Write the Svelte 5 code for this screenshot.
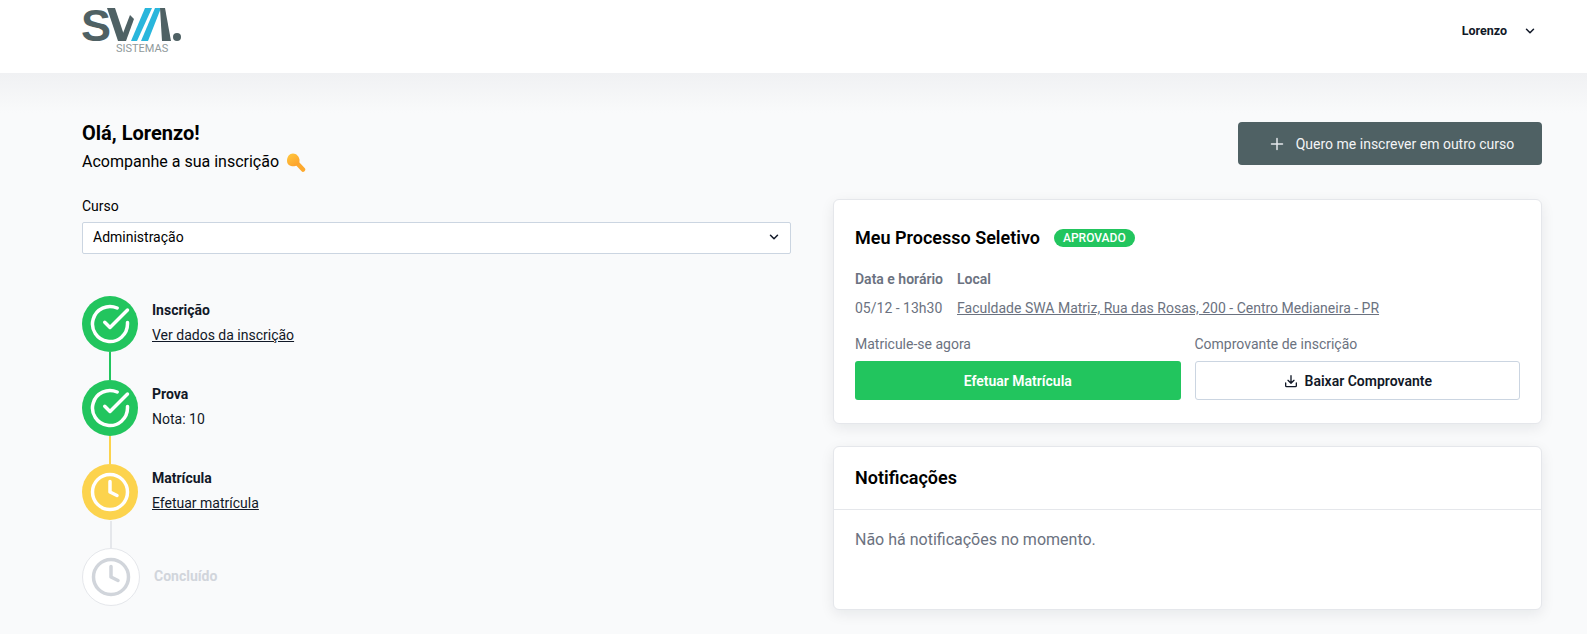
<script>
  let steps = [
    { title: "Inscrição", state: "done", link: "Ver dados da inscrição" },
    { title: "Prova", state: "done", text: "Nota: 10" },
    { title: "Matrícula", state: "pending", link: "Efetuar matrícula" },
    { title: "Concluído", state: "todo" },
  ];
</script>

<header class="topbar">
  <div class="logo">
    <svg width="104" height="50" viewBox="0 0 104 50">
      <text x="-1" y="34" class="logo-s">S</text>
      <polygon points="25,1 33,1 44,34 36,34" fill="#4f6164" />
      <polygon points="38,34 44,34 52,12 48,8" fill="#4f6164" />
      <polygon points="49,34 55,34 70,1 63,1" fill="#29b6dc" />
      <polygon points="59,34 66,34 79,1 73,1" fill="#29b6dc" />
      <polygon points="78,1 83,1 89,34 80,34" fill="#4f6164" />
      <circle cx="95" cy="30" r="4" fill="#4f6164" />
      <text x="34" y="45" class="logo-sub">SISTEMAS</text>
    </svg>
  </div>
  <div class="user">
    <span>Lorenzo</span>
    <svg width="12" height="12" viewBox="0 0 24 24" fill="none" stroke="#111827" stroke-width="3" stroke-linecap="round" stroke-linejoin="round"><path d="M5 8.500l7 7 7-7" /></svg>
  </div>
</header>

<main class="page">
  <div class="intro">
    <div>
      <h1>Olá, Lorenzo!</h1>
      <p class="sub">
        Acompanhe a sua inscrição
        <svg class="hand" width="20" height="20" viewBox="0 0 20 20">
          <defs>
            <linearGradient id="hand-fill" x1="0" y1="0" x2="0.6" y2="1">
              <stop offset="0" stop-color="#ffc93f" />
              <stop offset="1" stop-color="#fda32c" />
            </linearGradient>
          </defs>
          <path d="M9 9l8 8.500" stroke="#fda92e" stroke-width="4.500" stroke-linecap="round" fill="none" />
          <path d="M1 9C1 4.500 3.500 1.500 7 1.500c3.500 0 6 3 6.500 6 .3 2.500-.5 4.500-2 5.500-1.800 1.300-4.500 1.500-6.500 1C2.500 13.500 1 11.500 1 9z" fill="url(#hand-fill)" />
        </svg>
      </p>
    </div>
    <button class="btn-dark">
      <svg width="14" height="14" viewBox="0 0 14 14" fill="none" stroke="#e5e7eb" stroke-width="1.500" stroke-linecap="round"><path d="M7 1.500v11M1.500 7h11" /></svg>
      Quero me inscrever em outro curso
    </button>
  </div>

  <div class="columns">
    <section class="left">
      <div class="label">Curso</div>
      <div class="select">
        <span>Administração</span>
        <svg width="12" height="12" viewBox="0 0 24 24" fill="none" stroke="#111827" stroke-width="3" stroke-linecap="round" stroke-linejoin="round"><path d="M5 8.500l7 7 7-7" /></svg>
      </div>

      <ul class="steps">
        {#each steps as step, i}
          <li class="step {step.state}">
            <div class="marker">
              <div class="circle">
                {#if step.state === "done"}
                  <svg width="42" height="42" viewBox="0 0 24 24" fill="none" stroke-linecap="round" stroke-linejoin="round" stroke-width="2">
                    <path d="M22 11.080V12a10 10 0 1 1-5.930-9.140" />
                    <polyline points="22 4 12 14.010 9 11.010" />
                  </svg>
                {:else}
                  <svg width="42" height="42" viewBox="0 0 24 24" fill="none" stroke-linecap="round" stroke-linejoin="round" stroke-width="2">
                    <circle cx="12" cy="12" r="10" />
                    <polyline points="12 6 12 12 16 14" />
                  </svg>
                {/if}
              </div>
              {#if i < steps.length - 1}
                <div class="line"></div>
              {/if}
            </div>
            <div class="info">
              <div class="step-title">{step.title}</div>
              {#if step.link}
                <a href="#top" class="step-link">{step.link}</a>
              {:else if step.text}
                <div class="step-text">{step.text}</div>
              {/if}
            </div>
          </li>
        {/each}
      </ul>
    </section>

    <section class="right">
      <div class="card process">
        <div class="card-head">
          <h2>Meu Processo Seletivo</h2>
          <span class="badge">APROVADO</span>
        </div>
        <div class="meta">
          <div class="meta-h">Data e horário</div>
          <div class="meta-h">Local</div>
          <div>05/12 - 13h30</div>
          <a href="#top">Faculdade SWA Matriz, Rua das Rosas, 200 - Centro Medianeira - PR</a>
        </div>
        <div class="actions">
          <div class="action">
            <div class="action-label">Matricule-se agora</div>
            <button class="btn-green">Efetuar Matrícula</button>
          </div>
          <div class="action">
            <div class="action-label">Comprovante de inscrição</div>
            <button class="btn-outline">
              <svg width="16" height="16" viewBox="0 0 24 24" fill="none" stroke="#111827" stroke-width="2" stroke-linecap="round" stroke-linejoin="round"><path d="M4 15v4a1.500 1.500 0 0 0 1.500 1.500h13A1.500 1.500 0 0 0 20 19v-4" /><path d="M12 4v11.500M7.500 11l4.500 4.500 4.500-4.500" /></svg>
              Baixar Comprovante
            </button>
          </div>
        </div>
      </div>

      <div class="card notes">
        <h2 class="notes-title">Notificações</h2>
        <p class="notes-body">Não há notificações no momento.</p>
      </div>
    </section>
  </div>
</main>

<style>
  :global(body) {
    background: #f9fafb;
    font-family: Roboto, "Liberation Sans", sans-serif;
    color: #111827;
    overflow: hidden;
  }
  h1, h2, p, ul {
    margin: 0;
    padding: 0;
  }
  button {
    font-family: inherit;
    cursor: pointer;
  }
  .topbar {
    height: 73px;
    background: #fff;
    display: flex;
    justify-content: space-between;
    padding: 0 51px 0 82px;
  }
  .logo {
    padding-top: 7px;
  }
  .logo svg {
    display: block;
    overflow: visible;
  }
  .logo-s {
    font-family: "Liberation Sans", sans-serif;
    font-size: 45px;
    font-weight: 700;
    fill: #4f6164;
  }
  .logo-sub {
    font-family: Roboto, sans-serif;
    font-size: 11px;
    fill: #8f999b;
  }
  .user {
    display: flex;
    align-items: center;
    gap: 17px;
    font-size: 12.500px;
    font-weight: 700;
    height: 61px;
  }
  .page {
    background: linear-gradient(#f0f1f3, #f9fafb 40px);
    padding: 48px 45px 0 82px;
  }
  .intro {
    display: flex;
    justify-content: space-between;
    align-items: flex-start;
  }
  h1 {
    font-size: 20px;
    font-weight: 700;
    line-height: 24px;
    color: #000;
  }
  .sub {
    font-size: 16px;
    line-height: 24px;
    margin-top: 5px;
    color: #000;
    display: flex;
    align-items: center;
    gap: 7px;
  }
  .btn-dark {
    width: 304px;
    height: 43px;
    margin-top: 1px;
    padding: 0 0 0 4px;
    background: #4f6164;
    border: 0;
    border-radius: 4px;
    color: #f3f4f6;
    font-size: 14px;
    display: flex;
    align-items: center;
    justify-content: center;
    gap: 12px;
  }
  .columns {
    display: grid;
    grid-template-columns: 709px 709px;
    column-gap: 42px;
    margin-top: 7px;
  }
  .label {
    font-size: 14px;
    line-height: 20px;
    margin-top: 15px;
    color: #000;
  }
  .select {
    margin-top: 6px;
    height: 32px;
    box-sizing: border-box;
    border: 1px solid #cbd5e1;
    border-radius: 2px;
    background: #fff;
    font-size: 14px;
    display: flex;
    align-items: center;
    justify-content: space-between;
    padding: 0 10px 2px 10px;
    color: #000;
  }
  .steps {
    list-style: none;
    margin-top: 42px;
  }
  .step {
    display: flex;
    gap: 14px;
    height: 84px;
  }
  .marker {
    width: 56px;
    display: flex;
    flex-direction: column;
    align-items: center;
    flex: none;
  }
  .circle {
    width: 56px;
    height: 56px;
    border-radius: 50%;
    flex: none;
    display: flex;
    align-items: center;
    justify-content: center;
  }
  .line {
    width: 2px;
    height: 28px;
    flex: none;
  }
  .done .circle {
    background: #22c55e;
  }
  .done .line {
    background: #22c55e;
  }
  .pending .circle {
    background: #fcd34d;
  }
  .pending .line {
    background: #e5e7eb;
    margin-top: 1px;
    margin-left: 1px;
  }
  .step:nth-child(2) .line {
    background: #fcd34d;
  }
  .done svg, .pending svg {
    stroke: #fff;
  }
  .todo .circle {
    width: 58px;
    height: 58px;
    box-sizing: border-box;
    background: #fff;
    border: 1px solid #e5e7eb;
    margin-left: 2px;
  }
  .todo svg {
    stroke: #d1d5db;
  }
  .info {
    padding-top: 6px;
    font-size: 14px;
  }
  .step-title {
    font-weight: 700;
    line-height: 16px;
  }
  .step-link, .step-text {
    display: block;
    margin-top: 9px;
    line-height: 16px;
    color: #111827;
  }
  .todo .info {
    padding: 20px 0 0 2px;
  }
  .todo .step-title {
    color: #d1d5db;
  }
  .right {
    display: flex;
    flex-direction: column;
    gap: 22px;
    margin-top: 18px;
  }
  .card {
    background: #fff;
    border: 1px solid #e5e7eb;
    border-radius: 6px;
    box-shadow: 0 4px 14px rgba(15, 23, 42, 0.08);
    box-sizing: border-box;
  }
  .process {
    height: 225px;
    padding: 0 21px;
  }
  .card-head {
    display: flex;
    align-items: center;
    gap: 14px;
    height: 24px;
    margin-top: 26px;
  }
  h2 {
    font-size: 18px;
    font-weight: 700;
    color: #000;
    line-height: 24px;
  }
  .process h2 {
    font-weight: 600;
  }
  .badge {
    background: #22c55e;
    color: #fff;
    font-size: 12px;
    font-weight: 500;
    height: 18px;
    line-height: 18px;
    padding: 0 9px;
    border-radius: 9px;
  }
  .meta {
    display: grid;
    grid-template-columns: max-content 1fr;
    column-gap: 14px;
    row-gap: 13px;
    font-size: 14px;
    line-height: 16px;
    color: #6b7280;
    margin-top: 21px;
  }
  .meta-h {
    font-weight: 600;
  }
  .meta a {
    color: #6b7280;
  }
  .actions {
    display: grid;
    grid-template-columns: 1fr 1fr;
    column-gap: 14px;
    margin-top: 20px;
  }
  .action-label {
    font-size: 14px;
    line-height: 16px;
    color: #6b7280;
  }
  .action button {
    margin-top: 9px;
    width: 100%;
    height: 39px;
    border-radius: 3px;
    font-size: 14px;
    font-weight: 600;
    display: flex;
    align-items: center;
    justify-content: center;
    gap: 6px;
  }
  .btn-green {
    background: #22c55e;
    color: #fff;
    border: 0;
  }
  .btn-outline {
    background: #fff;
    color: #111827;
    border: 1px solid #cbd5e1;
  }
  .notes {
    height: 164px;
  }
  .notes-title {
    padding: 19px 21px 0;
    height: 63px;
    box-sizing: border-box;
    border-bottom: 1px solid #e5e7eb;
    font-weight: 600;
  }
  .notes-body {
    padding: 20px 21px;
    font-size: 16px;
    line-height: 20px;
    color: #6b7280;
  }
</style>
